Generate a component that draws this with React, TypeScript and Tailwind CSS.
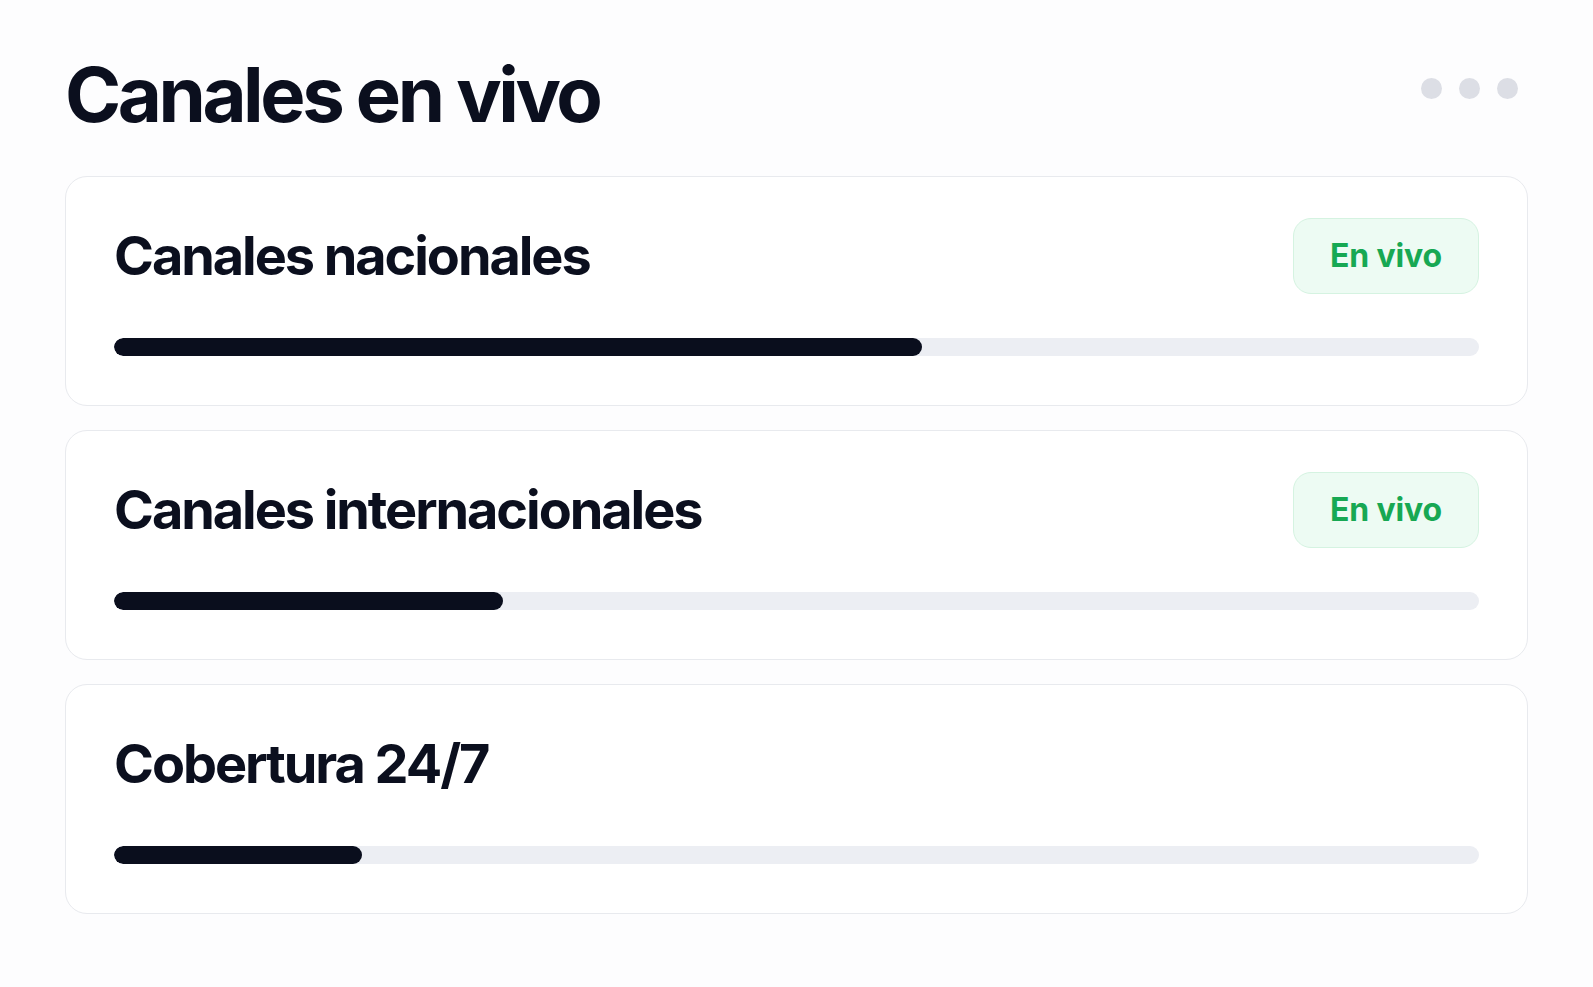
import React from "react";

/**
 * Live channels panel: heading with window dots, then one card per channel
 * group with an optional "En vivo" badge and a progress bar.
 */

type Channel = {
  name: string;
  live: boolean;
  progress: number; // 0..1
};

const CHANNELS: Channel[] = [
  { name: "Canales nacionales", live: true, progress: 0.592 },
  { name: "Canales internacionales", live: true, progress: 0.285 },
  { name: "Cobertura 24/7", live: false, progress: 0.182 },
];

function LiveBadge() {
  return (
    <span className="flex h-[76px] items-center rounded-[18px] border border-[#d5f3e1] bg-[#edfbf3] px-9 text-[32px] font-bold tracking-[-0.005em] text-[#17a853]">
      En vivo
    </span>
  );
}

function ChannelCard({ channel }: { channel: Channel }) {
  return (
    <div className="rounded-[22px] border border-[#e8eaee] bg-white px-12 pb-[49px] pt-[41px]">
      <div className="flex h-[76px] items-center justify-between">
        <h2 className="text-[54px] font-bold leading-none tracking-[-0.038em] text-[#0b0f1e]">
          {channel.name}
        </h2>
        {channel.live && <LiveBadge />}
      </div>

      <div className="mt-11 h-[18px] w-full overflow-hidden rounded-full bg-[#eceef3]">
        <div
          className="h-full rounded-full bg-[#0a0e1d]"
          style={{ width: `${channel.progress * 100}%` }}
        />
      </div>
    </div>
  );
}

export default function App() {
  return (
    <div
      className="min-h-screen bg-[#fdfdfe] px-[65px] pb-16 pt-14"
      style={{ fontFamily: "Inter, 'Noto Sans', sans-serif" }}
    >
      <div className="flex items-center justify-between pr-[10px]">
        <h1 className="text-[76px] font-bold leading-none tracking-[-0.045em] text-[#0b0f1e]">
          Canales en vivo
        </h1>
        <div className="mb-3 flex gap-[17px]">
          {[0, 1, 2].map((i) => (
            <span key={i} className="h-[21px] w-[21px] rounded-full bg-[#dcdee5]" />
          ))}
        </div>
      </div>

      <div className="mt-11 flex flex-col gap-6">
        {CHANNELS.map((c) => (
          <ChannelCard key={c.name} channel={c} />
        ))}
      </div>
    </div>
  );
}
